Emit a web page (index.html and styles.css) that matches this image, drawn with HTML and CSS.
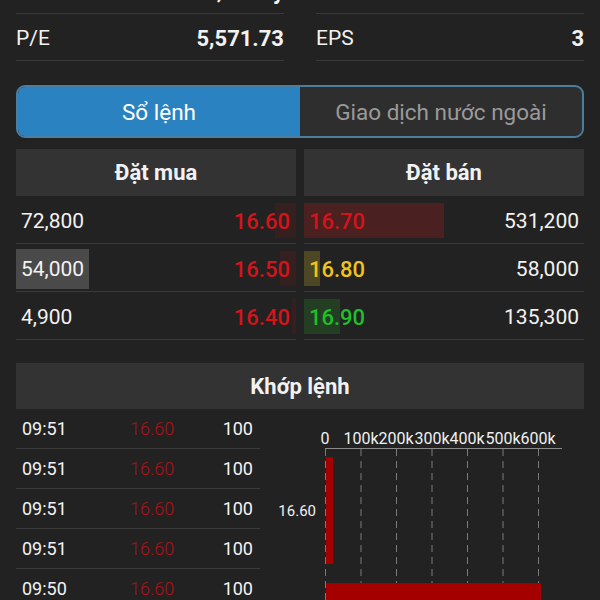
FILE: index.html
```html
<!DOCTYPE html>
<html lang="vi">
<head>
  <meta charset="UTF-8">
  <meta name="viewport" content="width=device-width, initial-scale=1.0">
  <title>Sổ lệnh</title>
  <link rel="stylesheet" href="styles.css">
</head>
<body>
  <div class="page">
    <!-- chỉ số cơ bản -->
    <div class="stats">
      <div class="stat-col">
        <div class="stat-row"><span>Vốn hóa</span><b>9,203 tỷ</b></div>
        <div class="stat-row"><span>P/E</span><b>5,571.73</b></div>
      </div>
      <div class="stat-col">
        <div class="stat-row"><span>ROE</span><b>0.15</b></div>
        <div class="stat-row"><span>EPS</span><b>3</b></div>
      </div>
    </div>

    <div class="tabs">
      <div class="tab active">Sổ lệnh</div>
      <div class="tab">Giao dịch nước ngoài</div>
    </div>

    <div class="book">
      <div class="side">
        <div class="side-head">Đặt mua</div>
        <div class="book-row">
          <span class="vol">72,800</span>
          <span class="price red">16.60</span>
          <span class="bar bar-bid" style="width: 21px"></span>
        </div>
        <div class="book-row">
          <span class="vol selected">54,000</span>
          <span class="price red">16.50</span>
          <span class="bar bar-bid" style="width: 16px"></span>
        </div>
        <div class="book-row">
          <span class="vol">4,900</span>
          <span class="price red">16.40</span>
          <span class="bar bar-bid" style="width: 4px"></span>
        </div>
      </div>
      <div class="side">
        <div class="side-head">Đặt bán</div>
        <div class="book-row">
          <span class="bar bar-red" style="width: 140px"></span>
          <span class="price red">16.70</span>
          <span class="vol">531,200</span>
        </div>
        <div class="book-row">
          <span class="bar bar-yellow" style="width: 16px"></span>
          <span class="price yellow">16.80</span>
          <span class="vol">58,000</span>
        </div>
        <div class="book-row">
          <span class="bar bar-green" style="width: 36px"></span>
          <span class="price green">16.90</span>
          <span class="vol">135,300</span>
        </div>
      </div>
    </div>

    <div class="match-head">Khớp lệnh</div>
    <div class="match">
      <div class="trades">
        <div class="trade"><span class="t-time">09:51</span><span class="t-price">16.60</span><span class="t-vol">100</span></div>
        <div class="trade"><span class="t-time">09:51</span><span class="t-price">16.60</span><span class="t-vol">100</span></div>
        <div class="trade"><span class="t-time">09:51</span><span class="t-price">16.60</span><span class="t-vol">100</span></div>
        <div class="trade"><span class="t-time">09:51</span><span class="t-price">16.60</span><span class="t-vol">100</span></div>
        <div class="trade"><span class="t-time">09:50</span><span class="t-price">16.60</span><span class="t-vol">100</span></div>
      </div>
      <div class="chart">
        <svg width="324" height="200" viewBox="0 0 324 200">
          <g class="ticks" text-anchor="middle">
            <text x="65" y="35">0</text>
            <text x="101" y="35">100k</text>
            <text x="136" y="35">200k</text>
            <text x="172" y="35">300k</text>
            <text x="207" y="35">400k</text>
            <text x="243" y="35">500k</text>
            <text x="278" y="35">600k</text>
          </g>
          <line x1="65" y1="39.5" x2="302" y2="39.5" stroke="#8a8a8a" stroke-width="1"/>
          <g stroke="#7a7a7a" stroke-width="1" stroke-dasharray="7 5">
            <line x1="65.5" y1="40" x2="65.5" y2="200"/>
            <line x1="101" y1="40" x2="101" y2="200"/>
            <line x1="136.5" y1="40" x2="136.5" y2="200"/>
            <line x1="172" y1="40" x2="172" y2="200"/>
            <line x1="207.5" y1="40" x2="207.5" y2="200"/>
            <line x1="243" y1="40" x2="243" y2="200"/>
            <line x1="278.5" y1="40" x2="278.5" y2="200"/>
          </g>
          <rect x="66" y="48" width="7" height="107" fill="#a50000"/>
          <rect x="66" y="174" width="215" height="30" fill="#a50000"/>
          <text class="ylabel" x="56" y="107" text-anchor="end">16.60</text>
        </svg>
      </div>
    </div>
  </div>
</body>
</html>
```

FILE: styles.css
```css
body {
  margin: 0;
  background-color: #222222;
  color: #f2f2f2;
  font-family: Roboto, 'Noto Sans', sans-serif;
  overflow: hidden;
}

.page {
  margin-top: -33px;
  padding: 0 16px;
}

.stats {
  display: grid;
  grid-template-columns: 268px 268px;
  gap: 32px;
}

.stat-row {
  display: flex;
  justify-content: space-between;
  align-items: center;
  height: 44px;
  padding-top: 2px;
  border-bottom: 1px solid #3a3a3a;
  font-size: 21px;
}

.stat-row b {
  font-size: 22px;
  font-weight: 700;
}

.tabs {
  display: flex;
  margin-top: 24px;
  height: 49px;
  border: 2px solid #4a7d9e;
  border-radius: 9px;
  overflow: hidden;
  background-color: #2e2e2e;
}

.tab {
  flex: 1;
  display: flex;
  align-items: center;
  justify-content: center;
  font-size: 22.5px;
  color: #9a9a9a;
}

.tab.active {
  background-color: #2b82c0;
  color: #ffffff;
}

.book {
  display: grid;
  grid-template-columns: 280px 280px;
  gap: 8px;
  margin-top: 11px;
}

.side-head, .match-head {
  height: 47px;
  display: flex;
  align-items: center;
  justify-content: center;
  background-color: #333333;
  font-size: 22px;
  font-weight: 700;
}

.book-row {
  position: relative;
  display: flex;
  justify-content: space-between;
  align-items: center;
  height: 44px;
  padding-top: 3px;
  border-bottom: 1px solid #3a3a3a;
  font-size: 21px;
}

.book-row span {
  position: relative;
  z-index: 1;
}

.side:first-child .vol {
  padding: 8px 5px;
}

.side:first-child .price {
  padding-right: 6px;
}

.side:last-child .price {
  padding-left: 5px;
}

.side:last-child .vol {
  padding-right: 5px;
}

.vol.selected {
  background-color: #4a4a4a;
}

.price {
  font-size: 22px;
  font-weight: 500;
}

.red { color: #d3151b; }
.yellow { color: #f0c419; }
.green { color: #1fbf2a; }

.book-row .bar {
  position: absolute;
  top: 7px;
  bottom: 5px;
  z-index: 0;
}

.bar-bid {
  right: 0;
  background-color: rgba(150, 20, 20, 0.18);
}

.bar-red {
  left: 0;
  background-color: rgba(150, 30, 30, 0.35);
}

.bar-yellow {
  left: 0;
  background-color: rgba(160, 140, 40, 0.35);
}

.bar-green {
  left: 0;
  background-color: rgba(40, 130, 40, 0.3);
}

.match-head {
  height: 46px;
  margin-top: 23px;
}

.match {
  display: flex;
}

.trades {
  width: 244px;
  flex: none;
}

.trade {
  display: flex;
  align-items: center;
  height: 39px;
  border-bottom: 1px solid #3a3a3a;
  font-size: 18px;
}

.t-time {
  width: 108px;
  padding-left: 6px;
}

.t-price {
  color: #a8141a;
  font-weight: 300;
  width: 70px;
}

.t-vol {
  width: 53px;
  text-align: right;
}

.chart svg {
  display: block;
}

.chart text {
  fill: #f0f0f0;
  font-family: Roboto, 'Noto Sans', sans-serif;
  font-size: 16px;
}

.chart .ylabel {
  font-size: 15px;
}
```
